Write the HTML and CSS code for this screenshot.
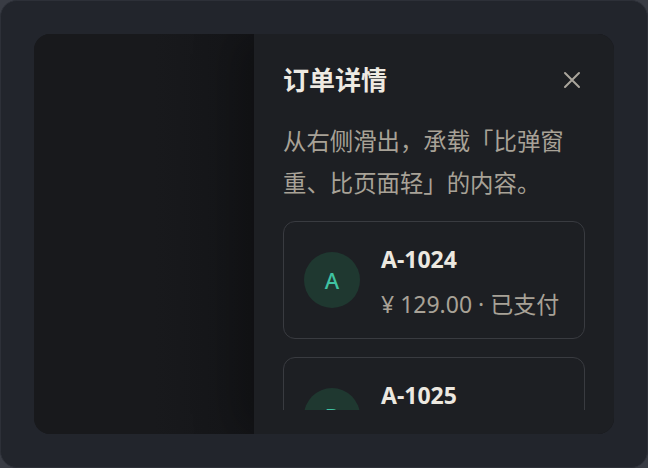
FILE: index.html
```html
<!DOCTYPE html>
<html lang="zh-CN">
<head>
<meta charset="utf-8">
<title>订单详情</title>
<link rel="stylesheet" href="styles.css">
</head>
<body>
<div class="frame">
  <div class="panel">
    <div class="backdrop"></div>
    <aside class="drawer">
      <header class="drawer-header">
        <h2 class="drawer-title">订单详情</h2>
        <button class="close-btn" aria-label="关闭">
          <svg width="18" height="18" viewBox="0 0 18 18" fill="none" stroke="currentColor" stroke-width="2" stroke-linecap="round">
            <path d="M2 2 L16 16 M16 2 L2 16"/>
          </svg>
        </button>
      </header>
      <div class="drawer-body">
        <p class="drawer-desc">从右侧滑出，承载「比弹窗重、比页面轻」的内容。</p>
        <div class="order-list">
          <div class="order-card">
            <div class="avatar">A</div>
            <div class="info">
              <div class="order-id">A-1024</div>
              <div class="order-meta">¥ 129.00 · 已支付</div>
            </div>
          </div>
          <div class="order-card">
            <div class="avatar">B</div>
            <div class="info">
              <div class="order-id">A-1025</div>
              <div class="order-meta">¥ 86.50 · 待发货</div>
            </div>
          </div>
        </div>
      </div>
    </aside>
  </div>
</div>
</body>
</html>
```

FILE: styles.css
```css
html, body {
  margin: 0;
  padding: 0;
}
body {
  background: #393c44;
  font-family: "Noto Sans", "Noto Sans CJK SC", sans-serif;
  width: 648px;
  height: 468px;
  overflow: hidden;
}
.frame {
  box-sizing: border-box;
  width: 648px;
  height: 468px;
  border-radius: 17px;
  background: #22252c;
  border: 1px solid #2d3038;
  padding: 33px;
}
.panel {
  display: flex;
  height: 100%;
  border-radius: 16px;
  overflow: hidden;
  background: #17181b;
}
.backdrop {
  flex: 1;
  background: linear-gradient(to right, #18191c 0%, #18191c 55%, #141518 100%);
}
.drawer {
  box-sizing: border-box;
  width: 360px;
  flex: none;
  background: #1d1f23;
  padding: 28px 29px 24px;
  display: flex;
  flex-direction: column;
  box-shadow: -18px 0 40px rgba(0, 0, 0, 0.25);
}
.drawer-header {
  display: flex;
  align-items: center;
  justify-content: space-between;
  height: 36px;
}
.drawer-title {
  margin: 0;
  font-size: 26px;
  line-height: 36px;
  font-weight: 700;
  color: #eeeae2;
}
.close-btn {
  width: 28px;
  height: 28px;
  margin-right: -1px;
  padding: 0;
  border: 0;
  background: transparent;
  color: #aaa59c;
  display: flex;
  align-items: center;
  justify-content: center;
}
.drawer-body {
  flex: 1;
  min-height: 0;
  overflow: hidden;
}
.drawer-desc {
  margin: 22px 0 17px;
  font-size: 23.4px;
  line-height: 42px;
  color: #a8a297;
}
.order-list {
  display: flex;
  flex-direction: column;
  gap: 18px;
}
.order-card {
  box-sizing: border-box;
  height: 118px;
  flex: none;
  border: 1px solid #393b40;
  border-radius: 12px;
  padding: 0 20px;
  display: flex;
  align-items: center;
  gap: 21px;
}
.avatar {
  width: 56px;
  height: 56px;
  flex: none;
  border-radius: 50%;
  background: #1f3830;
  color: #3fc3a2;
  font-size: 22px;
  font-weight: 500;
  display: flex;
  align-items: center;
  justify-content: center;
}
.info {
  display: flex;
  flex-direction: column;
}
.order-id {
  font-size: 23px;
  line-height: 32px;
  font-weight: 700;
  color: #ece8e0;
}
.order-meta {
  margin-top: 15px;
  font-size: 23px;
  line-height: 28px;
  color: #a8a297;
}
```
